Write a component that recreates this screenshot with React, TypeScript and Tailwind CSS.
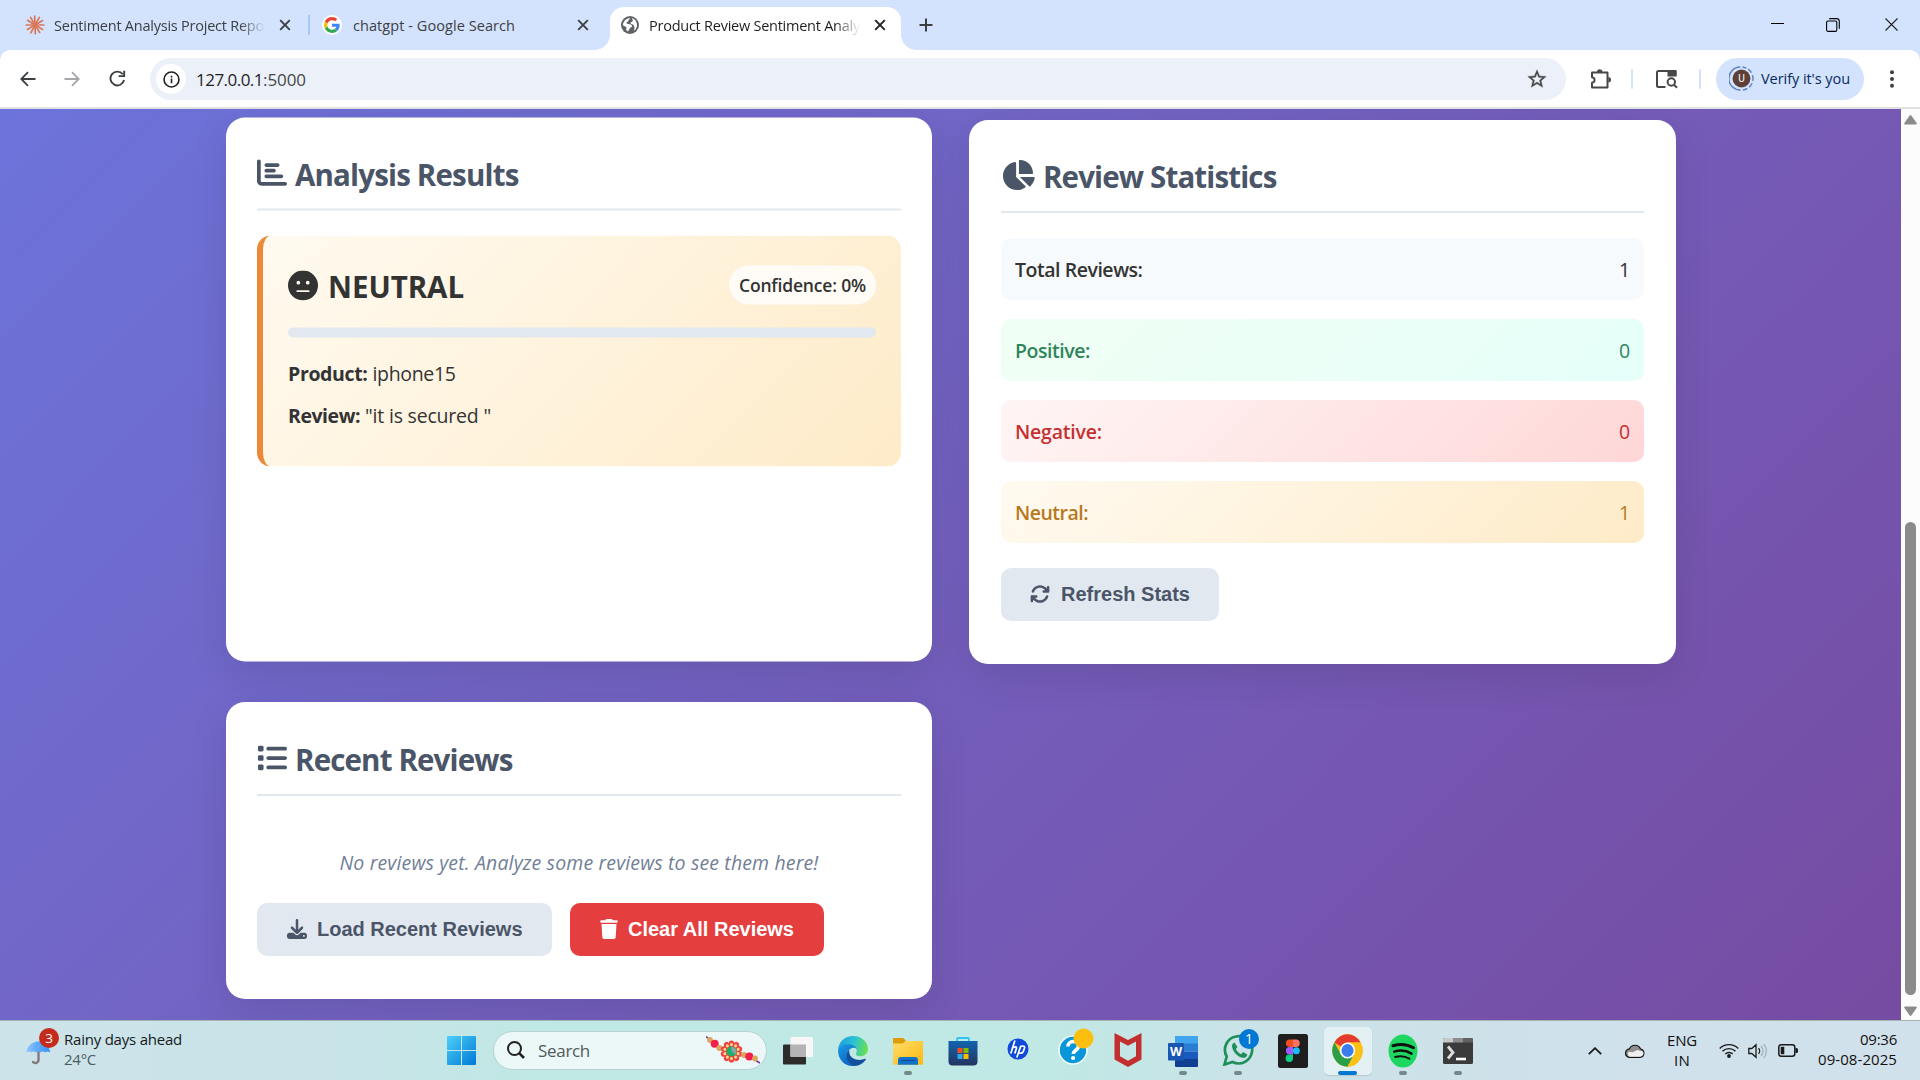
import { useLayoutEffect, useRef, useState } from "react";
import type { ReactNode } from "react";
import {
  FaArrowsRotate,
  FaChartBar,
  FaChartPie,
  FaDownload,
  FaFaceMeh,
  FaList,
  FaTrash,
} from "react-icons/fa6";

/** Single line of text whose tracking is adjusted so that it spans `w` pixels. */
function Line({ w, children, className = "" }: { w: number; children: string; className?: string }) {
  const ref = useRef<HTMLSpanElement>(null);
  const [spacing, setSpacing] = useState(0);
  useLayoutEffect(() => {
    if (!ref.current) return;
    const natural = ref.current.getBoundingClientRect().width;
    setSpacing((w - natural) / children.length);
  }, [w, children]);
  return (
    <span ref={ref} className={"inline-block shrink-0 whitespace-pre " + className} style={{ letterSpacing: spacing }}>
      {children}
    </span>
  );
}

/* ---------- Browser chrome ---------- */

function CloseX({ className }: { className: string }) {
  return (
    <svg viewBox="0 0 12 12" className={"h-3 w-3 shrink-0 " + className} fill="none" stroke="currentColor" strokeWidth="1.9">
      <path d="M1.2 1.2 10.8 10.8M10.8 1.2 1.2 10.8" />
    </svg>
  );
}

function Burst() {
  const rays = [0, 30, 58, 88, 118, 150, 180, 212, 240, 268, 300, 330];
  return (
    <svg viewBox="-10 -10 20 20" className="h-5 w-5 shrink-0" stroke="#d97757" strokeWidth="1.7" strokeLinecap="round">
      {rays.map((r) => (
        <path key={r} d="M1 0H8.8" transform={`rotate(${r})`} />
      ))}
    </svg>
  );
}

function GoogleG() {
  return (
    <span className="flex h-5 w-5 shrink-0 items-center justify-center rounded-full bg-white">
      <svg viewBox="0 0 48 48" className="h-4 w-4">
        <path fill="#ea4335" d="M24 9.5c3.54 0 6.71 1.22 9.21 3.6l6.85-6.85C35.9 2.38 30.47 0 24 0 14.62 0 6.51 5.38 2.56 13.22l7.98 6.19C12.43 13.72 17.74 9.5 24 9.5z" />
        <path fill="#4285f4" d="M46.98 24.55c0-1.57-.15-3.09-.38-4.55H24v9.02h12.94c-.58 2.96-2.26 5.48-4.78 7.18l7.73 6c4.51-4.18 7.09-10.36 7.09-17.65z" />
        <path fill="#fbbc05" d="M10.53 28.59c-.48-1.45-.76-2.99-.76-4.59s.27-3.14.76-4.59l-7.98-6.19C.92 16.46 0 20.12 0 24c0 3.88.92 7.54 2.56 10.78l7.97-6.19z" />
        <path fill="#34a853" d="M24 48c6.48 0 11.93-2.13 15.89-5.81l-7.73-6c-2.15 1.45-4.92 2.3-8.16 2.3-6.26 0-11.57-4.22-13.47-9.91l-7.98 6.19C6.51 42.62 14.62 48 24 48z" />
      </svg>
    </span>
  );
}

function Globe() {
  return (
    <svg viewBox="0 0 18 18" className="h-[18px] w-[18px] shrink-0">
      <circle cx="9" cy="9" r="9" fill="#5f6368" />
      <path
        d="M2 9.2C2 5.6 5 2.2 9.2 2c-.2 1.2-1.7 1.2-1.7 2.4 0 1.5-2 1.2-2 2.7 0 1.6 4.700.5 5.500 2.600.4 1.200-.8 1.800-1.800 1.900-.6 1.600-1.200 2.100-2.200 3.900C4.800 14.800 5 12.900 5.500 12 5.800 10.300 3.500 10.400 2 9.200zM11 2.300C14 3 16 5.800 16 9c0 2.500-1.300 4.600-3 5.800-.2-1.500 1-2.300.4-3.600-.5-1-.2-1.600-1.100-2.400-1.100-.9-2.600-.3-2.800-1.500-.2-1.500 2.200-1 2.300-2.500C11.900 3.800 11 3.500 11 2.300z"
        fill="#fff"
      />
    </svg>
  );
}

function TabStrip() {
  return (
    <div className="flex h-[50px] items-start bg-[#d3e2fd] text-[14.5px] leading-[20px] text-[#3c4043]">
      <div className="flex h-[50px] w-[310px] items-center pl-[25px]">
        <Burst />
        <div className="ml-[9px] h-[19px] w-[211px] [mask-image:linear-gradient(to_right,#000_88%,transparent)]">
          <Line w={210}>Sentiment Analysis Project Repo</Line>
        </div>
        <CloseX className="ml-[14px] text-[#3c4043]" />
        <span className="ml-[17px] h-5 w-[2px] bg-[#a8c7fa]" />
      </div>
      <div className="flex h-[50px] w-[285px] items-center pl-[12px]">
        <GoogleG />
        <div className="ml-[11px] h-[19px] w-[224px]">
          <Line w={162}>chatgpt - Google Search</Line>
        </div>
        <CloseX className="text-[#3c4043]" />
      </div>
      <div className="flex h-[50px] items-end">
        <div className="h-[15px] w-[15px] bg-[radial-gradient(circle_at_0_0,transparent_14.5px,#fff_15px)]" />
        <div className="flex h-[43px] w-[291px] items-center rounded-t-[14px] bg-white pb-[7px] pl-[11px] text-[#1f1f1f]">
          <Globe />
          <div className="ml-[10px] h-[19px] w-[211px] [mask-image:linear-gradient(to_right,#000_88%,transparent)]">
            <Line w={211}>Product Review Sentiment Analy</Line>
          </div>
          <CloseX className="ml-[14px] text-[#1f1f1f]" />
        </div>
        <div className="h-[15px] w-[15px] bg-[radial-gradient(circle_at_100%_0,transparent_14.5px,#fff_15px)]" />
      </div>
      <svg viewBox="0 0 14 14" className="mt-[18px] ml-[3px] h-[14px] w-[14px]" stroke="#3c4043" strokeWidth="2">
        <path d="M7 .5v13M.5 7h13" />
      </svg>
      <div className="ml-auto flex h-[50px] items-center pr-[22px] pb-[1px]">
        <span className="mb-[2px] h-px w-[13px] bg-black" />
        <svg viewBox="0 0 14 14" className="ml-[42px] h-[14px] w-[14px]" fill="none" stroke="#000" strokeWidth="1.1">
          <rect x=".6" y="3" width="10.200" height="10.400" rx="1.500" />
          <path d="M3.200 .6h7.300a2.800 2.800 0 0 1 2.800 2.800v7.300" />
        </svg>
        <svg viewBox="0 0 13 13" className="ml-[45px] h-[13px] w-[13px]" stroke="#222" strokeWidth="1.1">
          <path d="M.5.5l12 12M12.500.5l-12 12" />
        </svg>
      </div>
    </div>
  );
}

function Toolbar() {
  return (
    <div className="h-[59px] bg-[#d3e2fd]">
      <div className="flex h-[59px] items-start rounded-t-[10px] border-b-2 border-[#dfe1e2] bg-white">
        <div className="flex h-[57px] items-center pl-[20px] text-[#3c4043]">
          <svg viewBox="0 0 16 16" className="h-4 w-4" fill="none" stroke="currentColor" strokeWidth="1.800">
            <path d="M15.500 8H1.500M8 1.200 1.300 8 8 14.800" />
          </svg>
          <svg viewBox="0 0 16 16" className="ml-[28px] h-4 w-4 text-[#a5a7aa]" fill="none" stroke="currentColor" strokeWidth="1.800">
            <path d="M.5 8h14M8 1.200 14.700 8 8 14.800" />
          </svg>
          <svg viewBox="0 0 16 16" className="ml-[29px] h-[17px] w-[17px]" fill="none" stroke="currentColor" strokeWidth="1.800">
            <path d="M14.200 9.500A6.500 6.500 0 1 1 13 4M14.300.6v5.200H9.100" />
          </svg>
        </div>
        <div className="mt-[8px] ml-[24px] flex h-[42px] w-[1416px] items-center rounded-full bg-[#ebf0f9] pl-[6px] text-[17px] text-[#1f1f1f]">
          <span className="flex h-[30px] w-[30px] items-center justify-center rounded-full bg-white">
            <svg viewBox="0 0 18 18" className="h-[17px] w-[17px]" fill="none" stroke="#202124" strokeWidth="1.700">
              <circle cx="9" cy="9" r="7.900" />
              <path d="M9 8v5M9 4.900v1.900" />
            </svg>
          </span>
          <div className="mt-[2px] ml-[10px] flex">
            <Line w={67}>127.0.0.1</Line>
            <Line w={43} className="text-[#474747]">:5000</Line>
          </div>
          <svg viewBox="0 0 24 24" className="mr-[18px] ml-auto h-[22px] w-[22px]" fill="#474747">
            <path d="M22 9.240l-7.190-.62L12 2 9.190 8.630 2 9.240l5.460 4.730L5.820 21 12 17.270 18.180 21l-1.630-7.030L22 9.240zM12 15.400l-3.760 2.270 1-4.280-3.320-2.880 4.380-.38L12 6.100l1.710 4.040 4.380.38-3.320 2.880 1 4.280L12 15.400z" stroke="#474747" strokeWidth=".4" />
          </svg>
        </div>
        <div className="flex h-[57px] items-center">
          <svg viewBox="0 0 22 22" className="ml-[24px] h-[22px] w-[22px]">
            <path d="M2 4.500h15.500V19.500H2v-4.800c3.400-.5 3.400-5 0-5.500z" fill="none" stroke="#474747" strokeWidth="2" strokeLinejoin="round" />
            <path d="M7 4a2.700 2.700 0 0 1 5.400 0zM18.300 9a2.700 2.700 0 0 1 0 5.400z" fill="#474747" />
          </svg>
          <span className="ml-[19px] h-5 w-[2px] rounded bg-[#d3e2fd]" />
          <svg viewBox="0 0 22 20" className="ml-[22px] h-[20px] w-[23px]" fill="none" stroke="#474747" strokeWidth="2">
            <path d="M10 18H3a1.500 1.500 0 0 1-1.500-1.500V3.500A1.500 1.500 0 0 1 3 2h17v5" />
            <path d="M12 2h9v5.500h-9z" fill="#474747" stroke="none" />
            <circle cx="15.800" cy="13" r="3.700" />
            <path d="M18.500 15.800l3 3" />
          </svg>
          <span className="ml-[21px] h-5 w-[2px] rounded bg-[#d3e2fd]" />
          <div className="ml-[15px] flex h-[42px] w-[148px] items-center rounded-full bg-[#d3e2fd] pl-[13px] text-[14.5px] text-[#062a5e]">
            <svg viewBox="0 0 26 26" className="h-[25px] w-[25px]">
              <path d="M14 1A12 12 0 0 1 18 2.200M20 3.300A12 12 0 0 1 23.300 7M24.400 9.500A12 12 0 0 1 24.700 15.500M24 18A12 12 0 0 1 21 22M19 23.400A12 12 0 0 1 14.500 24.900M12 25A12 12 0 0 1 11.700 1" fill="none" stroke="#5c82bd" strokeWidth="1.500" />
              <circle cx="13" cy="13" r="9.300" fill="#5d4037" />
              <text x="13" y="16.800" textAnchor="middle" fill="#fff" fontSize="10.500" fontFamily="Roboto, sans-serif">U</text>
            </svg>
            <Line w={89} className="ml-[7px]">Verify it's you</Line>
          </div>
          <svg viewBox="0 0 4 18" className="ml-[26px] h-[18px] w-1" fill="#3c4043">
            <circle cx="2" cy="2.200" r="2" />
            <circle cx="2" cy="9" r="2" />
            <circle cx="2" cy="15.800" r="2" />
          </svg>
        </div>
      </div>
    </div>
  );
}

/* ---------- Page ---------- */

function Card({ children, className }: { children: ReactNode; className: string }) {
  return (
    <section className={"rounded-[19px] bg-white pt-[31px] shadow-[0_12px_38px_rgba(0,0,0,0.1)] " + className}>
      {children}
    </section>
  );
}

function Heading({ icon, text, w }: { icon: ReactNode; text: string; w: number }) {
  return (
    <h2 className="flex h-[62px] items-start border-b-2 border-[#e2e8f0] text-[29.5px] leading-[48px] font-bold text-[#4a5568]">
      <span className="mr-[8px] flex h-[48px] items-center">{icon}</span>
      <Line w={w} className="pt-[1.5px]">{text}</Line>
    </h2>
  );
}

function AnalysisResults() {
  return (
    <Card className="h-[544px] w-[706px] -translate-y-[2.5px] px-[31px]">
      <Heading icon={<FaChartBar className="h-[30px] w-[30px]" />} text="Analysis Results" w={223.5} />
      <div className="mt-[25px] h-[231px] rounded-[14px] border-l-[6px] border-[#ed8936] bg-linear-135 from-[#fffaf0] to-[#feebc8] px-[25px] pt-[26px] text-[#333]">
        <div className="flex h-[48px] items-center">
          <FaFaceMeh className="h-[30px] w-[30px]" />
          <Line w={136} className="ml-[10px] pt-[1px] text-[29.5px] leading-[48px] font-bold">NEUTRAL</Line>
          <span className="mb-[1px] ml-auto flex h-[39px] w-[147px] items-center justify-center rounded-full bg-white/80 text-[17.5px] font-semibold">
            <Line w={127}>Confidence: 0%</Line>
          </span>
        </div>
        <div className="mt-[18px] h-[10px] rounded-full bg-[#e2e8f0]" />
        <p className="mt-[20px] flex h-[32px] items-center text-[19.5px] leading-[32px]">
          <Line w={79.5} className="mr-[5px] font-bold">Product:</Line>
          <Line w={83}>iphone15</Line>
        </p>
        <p className="mt-[10px] flex h-[32px] items-center text-[19.5px] leading-[32px]">
          <Line w={72} className="mr-[5px] font-bold">Review:</Line>
          <Line w={126}>"it is secured "</Line>
        </p>
      </div>
    </Card>
  );
}

const stats = [
  { label: "Total Reviews:", value: "1", w: 127.5, tone: "bg-[#f7fafc] text-[#333]" },
  { label: "Positive:", value: "0", w: 75, tone: "bg-linear-135 from-[#f0fff4] to-[#e6fffa] text-[#2f855a]" },
  { label: "Negative:", value: "0", w: 87, tone: "bg-linear-135 from-[#fff5f5] to-[#fed7d7] text-[#c53030]" },
  { label: "Neutral:", value: "1", w: 73, tone: "bg-linear-135 from-[#fffaf0] to-[#feebc8] text-[#b7791f]" },
];

function ReviewStatistics() {
  return (
    <Card className="h-[544px] w-[707px] pr-[32px] pl-[32px]">
      <Heading icon={<FaChartPie className="h-[30px] w-[34px]" />} text="Review Statistics" w={233.5} />
      <div className="mt-[25px] flex flex-col gap-[19px]">
        {stats.map((s) => (
          <div key={s.label} className={"flex h-[62px] items-center justify-between rounded-[10px] px-[14px] pt-[2px] text-[19.5px] " + s.tone}>
            <Line w={s.w} className="font-semibold">{s.label}</Line>
            <Line w={11}>{s.value}</Line>
          </div>
        ))}
      </div>
      <button className="mt-[25px] flex h-[53px] w-[218px] items-center rounded-[10px] bg-[#e2e8f0] pb-[2px] pl-[29px] font-['Liberation_Sans',Arial,sans-serif] text-[20px] font-bold text-[#4a5568]">
        <FaArrowsRotate className="mr-[11px] h-[20px] w-[20px]" />
        <Line w={129}>Refresh Stats</Line>
      </button>
    </Card>
  );
}

function RecentReviews() {
  return (
    <Card className="h-[297px] w-[706px] px-[31px] pt-[32px]">
      <Heading icon={<FaList className="h-[30px] w-[30px]" />} text="Recent Reviews" w={217.5} />
      <p className="mt-[51px] text-center text-[19.5px] leading-[32px] text-[#718096] italic">
        <Line w={479}>No reviews yet. Analyze some reviews to see them here!</Line>
      </p>
      <div className="mt-[24px] flex gap-[18px] font-['Liberation_Sans',Arial,sans-serif] text-[20px] font-bold">
        <button className="flex h-[53px] w-[295px] items-center rounded-[10px] bg-[#e2e8f0] pb-[2px] pl-[30px] text-[#4a5568]">
          <FaDownload className="mr-[10px] h-[20px] w-[20px]" />
          <Line w={205.5}>Load Recent Reviews</Line>
        </button>
        <button className="flex h-[53px] w-[254px] items-center rounded-[10px] bg-[#e53e3e] pb-[2px] pl-[30px] text-white">
          <FaTrash className="mr-[10px] h-[20px] w-[18px]" />
          <Line w={166}>Clear All Reviews</Line>
        </button>
      </div>
    </Card>
  );
}

function Scrollbar() {
  return (
    <div className="flex h-[911px] w-[19px] flex-col items-center bg-[#fcfcfc]">
      <svg viewBox="0 0 13 10" className="mt-[6px] h-[10px] w-[13px]" fill="#8b8b8b">
        <path d="M5.500 .8a1.200 1.200 0 0 1 2 0L12.600 8a1 1 0 0 1-.8 1.600H1.200A1 1 0 0 1 .4 8z" />
      </svg>
      <div className="mt-[397px] h-[473px] w-[11px] rounded-full bg-[#8b8b8b]" />
      <svg viewBox="0 0 13 10" className="mt-[11px] h-[10px] w-[13px] rotate-180" fill="#8b8b8b">
        <path d="M5.500 .8a1.200 1.200 0 0 1 2 0L12.600 8a1 1 0 0 1-.8 1.600H1.200A1 1 0 0 1 .4 8z" />
      </svg>
    </div>
  );
}

/* ---------- Taskbar ---------- */

function Umbrella() {
  return (
    <svg viewBox="0 0 34 40" className="h-[40px] w-[34px] shrink-0">
      <defs>
        <linearGradient id="umb" x1="0" x2="1">
          <stop offset="0" stopColor="#8ec5fb" />
          <stop offset="1" stopColor="#2e90f5" />
        </linearGradient>
      </defs>
      <path d="M12.500 24v8.500a3.200 3.200 0 0 1-5.500 1.500" fill="none" stroke="#84797a" strokeWidth="2.400" strokeLinecap="round" />
      <path d="M.3 24.500C1 18.500 6 13.500 12 13.500s11.500 5 12.200 11c-1.500-1.300-4-1.300-5 0-1.200-1.300-3.800-1.300-5 0-1-1.300-3-1.300-4 0-1.200-1.300-3.600-1.300-4.600 0-1-1.200-3.800-1.200-5.300 0z" fill="url(#umb)" />
      <path d="M10 24C9 20 10 16 12 13.500 15 16 15.500 20 14.500 24" fill="none" stroke="#5aa6ee" strokeWidth=".7" />
      <circle cx="23" cy="10" r="10" fill="#c42b1c" />
      <text x="23" y="15" textAnchor="middle" fontSize="13.500" fill="#fff" fontFamily="Open Sans, sans-serif">3</text>
    </svg>
  );
}

function StartLogo() {
  return (
    <svg viewBox="0 0 29 29" className="h-[29px] w-[29px] shrink-0">
      <defs>
        <linearGradient id="win" x1="0" y1="0" x2="1" y2="1" gradientUnits="objectBoundingBox">
          <stop offset="0" stopColor="#4cd0fb" />
          <stop offset="1" stopColor="#0078d4" />
        </linearGradient>
      </defs>
      <path d="M1 0H14V14H0V1a1 1 0 0 1 1-1zM15 0h13a1 1 0 0 1 1 1v13H15zM0 15h14v14H1a1 1 0 0 1-1-1zM15 15h14v13a1 1 0 0 1-1 1H15z" fill="url(#win)" />
    </svg>
  );
}

function Rakhi() {
  const petals = [0, 36, 72, 108, 144, 180, 216, 252, 288, 324];
  return (
    <svg viewBox="0 0 54 28" className="h-[28px] w-[54px]">
      <path d="M0 .5 12 11M44 21l10 6" stroke="#6b3fa0" strokeWidth="1.600" />
      <circle cx="4" cy="4" r="2.900" fill="#dfa45f" />
      <circle cx="8.700" cy="7.700" r="4" fill="#f0204a" />
      <circle cx="13.300" cy="12" r="2.900" fill="#dfa45f" />
      <g transform="translate(25.500 15.500)">
        {petals.map((p) => (
          <circle key={p} cx="0" cy="-8.400" r="2.700" fill="#ef4444" transform={`rotate(${p})`} />
        ))}
        <circle r="8.800" fill="#e8473f" />
        {petals.map((p) => (
          <circle key={p} cx="0" cy="-7" r="1.500" fill="#ffd98a" transform={`rotate(${p})`} />
        ))}
        <circle r="5" fill="#1fae6a" />
        <path d="M0-5a5 5 0 0 1 4 8L0 0z" fill="#79a9a8" />
      </g>
      <circle cx="38" cy="19" r="2.900" fill="#dfa45f" />
      <circle cx="43.300" cy="20.500" r="4" fill="#f0204a" />
      <circle cx="49" cy="22.500" r="2.900" fill="#dfa45f" />
    </svg>
  );
}

function TaskViewIcon() {
  return (
    <svg viewBox="0 0 30 30" className="h-[30px] w-[30px]">
      <rect x="0" y="8.500" width="23" height="20" rx="1" fill="#2d2c2b" />
      <rect x="7.500" y="1" width="22.500" height="20" rx="1" fill="#f7f7f7" />
      <path d="M7.500 8.500H23V21H8.500a1 1 0 0 1-1-1z" fill="#b4b4b4" />
    </svg>
  );
}

function EdgeIcon() {
  return (
    <svg viewBox="0 0 30 30" className="h-[30px] w-[30px]">
      <defs>
        <linearGradient id="edgeTop" x1="0" y1=".4" x2="1" y2=".6">
          <stop offset="0" stopColor="#1c9fe0" />
          <stop offset=".5" stopColor="#2bc3d2" />
          <stop offset="1" stopColor="#6be24a" />
        </linearGradient>
        <linearGradient id="edgeLeft" x1="0" y1="0" x2=".6" y2="1">
          <stop offset="0" stopColor="#1b9de2" />
          <stop offset="1" stopColor="#0a63c4" />
        </linearGradient>
      </defs>
      <path d="M0 14C.5 6 7 0 15 0c9 0 15 6.500 15 13 0 4.500-3.500 7.300-7.500 7.300-3.500 0-5-1.400-4.700-2.500.2-.6 1-1.300 1-3 0-3-3-5.800-7-5.800C6 9 1.500 11 0 14z" fill="url(#edgeTop)" />
      <path d="M0 14c1.500-4 6-6 11-5.700 4.500.2 7 2.500 7.700 5C17.500 11.500 15 11.400 13 12.500 9.500 14.500 8 18 9 22c1 4 4 7 7.500 8C8 30.800 0 25 0 14z" fill="url(#edgeLeft)" />
      <path d="M11.500 13.500C7.500 17 7.800 22 10 25.300 12 28.400 14.800 30 16.500 30c5 0 9.200-3 11.300-6.500.3-.6-.2-1-.8-.7-6 2.700-14 .5-15.500-5-.4-1.500-.4-3 0-4.300z" fill="#12509c" />
    </svg>
  );
}

function FolderIcon() {
  return (
    <svg viewBox="0 0 30 30" className="h-[30px] w-[30px]">
      <defs>
        <linearGradient id="fold" x1="0" y1="0" x2="1" y2="1">
          <stop offset="0" stopColor="#ffdc6b" />
          <stop offset="1" stopColor="#fbb910" />
        </linearGradient>
      </defs>
      <path d="M0 3a1 1 0 0 1 1-1h8.500a2 2 0 0 1 1.400.6L13 5v4H0z" fill="#dd9b0a" />
      <path d="M0 7.500h9.500L12.500 5H29a1 1 0 0 1 1 1v22a.8.8 0 0 1-.8.800H.8A.8.8 0 0 1 0 28z" fill="url(#fold)" />
      <path d="M5 24a3 3 0 0 1 3-3h14a3 3 0 0 1 3 3v4.800H5z" fill="#1272c8" />
      <path d="M8.500 24.500h13" stroke="#0b4a8f" strokeWidth="1.200" strokeLinecap="round" />
    </svg>
  );
}

function StoreIcon() {
  return (
    <svg viewBox="0 0 30 30" className="h-[30px] w-[30px]">
      <defs>
        <linearGradient id="store" x1="0" y1="0" x2="0" y2="1">
          <stop offset="0" stopColor="#1264b0" />
          <stop offset="1" stopColor="#23345f" />
        </linearGradient>
      </defs>
      <path d="M9 6V3.500A1.500 1.500 0 0 1 10.500 2h9A1.500 1.500 0 0 1 21 3.500V6" fill="none" stroke="#2cc4f4" strokeWidth="1.800" />
      <path d="M.5 5h29v20.500a4 4 0 0 1-4 4h-21a4 4 0 0 1-4-4z" fill="url(#store)" />
      <path d="M9.500 12h5v5h-5z" fill="#f25022" />
      <path d="M15.500 12h5v5h-5z" fill="#7fba00" />
      <path d="M9.500 18h5v5h-5z" fill="#30a9e8" />
      <path d="M15.500 18h5v5h-5z" fill="#ffb900" />
    </svg>
  );
}

function HpIcon() {
  return (
    <svg viewBox="0 0 22 22" className="mb-[3px] h-[22px] w-[22px]">
      <circle cx="11" cy="11" r="10.500" fill="#0f4bd8" />
      <path d="M7.900 2.500 3.800 15.500M6 9.500c2.500-1.200 4-.8 3.300 1.300L7.800 15.500M13.800 8 9.800 19.500M13.600 8.300c3.200-.8 4.600-.2 3.700 2.300l-.8 2.400c-.6 2-1.500 2.500-4.300 2.200" fill="none" stroke="#fff" strokeWidth="1.700" />
    </svg>
  );
}

function HelpIcon() {
  return (
    <svg viewBox="0 0 36 38" className="-mt-[7px] ml-[6px] h-[38px] w-[36px] shrink-0">
      <circle cx="15" cy="22" r="14.800" fill="#eefafd" />
      <circle cx="15" cy="22" r="13.200" fill="#0a97d9" />
      <path d="M10 18.500c0-6.500 10.500-6.500 10.500-.4 0 4.400-5.300 4-5.300 8" fill="none" stroke="#fff" strokeWidth="3.600" />
      <circle cx="15.100" cy="30" r="2.100" fill="#fff" />
      <circle cx="25.500" cy="10.500" r="10" fill="#fdbf0f" />
    </svg>
  );
}

function McAfeeIcon() {
  return (
    <svg viewBox="0 0 28 34" className="mb-px h-[34px] w-[28px]">
      <path d="M.5 0 14 7 27.500 0V26.500L14 34 .5 26.500zM6 8.500v14.700l8 4.600 8-4.600V8.500l-8 4.300z" fill="#c1302f" fillRule="evenodd" />
    </svg>
  );
}

function WordIcon() {
  return (
    <svg viewBox="0 0 30 32" className="h-[32px] w-[30px]">
      <path d="M7 1h22a1 1 0 0 1 1 1v7H7z" fill="#41a5ee" />
      <path d="M7 8.500h23v8H7z" fill="#2b7cd3" />
      <path d="M7 16.500h23v8H7z" fill="#185abd" />
      <path d="M7 24h23v7a1 1 0 0 1-1 1H8a1 1 0 0 1-1-1z" fill="#103f91" />
      <rect x="0" y="8" width="16" height="17.500" rx="1" fill="#1b56b2" />
      <text x="8" y="21.300" textAnchor="middle" fontSize="12.500" fontWeight="700" fill="#fff" fontFamily="Open Sans, sans-serif">W</text>
    </svg>
  );
}

function WhatsAppIcon() {
  return (
    <svg viewBox="0 0 40 38" className="-mt-[7px] ml-[4px] h-[38px] w-[40px] shrink-0">
      <path d="M4.500 36.500l2.200-8A13.600 13.600 0 1 1 12.500 34z" fill="none" stroke="#1f8f59" strokeWidth="2.700" />
      <path d="M14.500 14.500c-2 .8-3 3-2.200 5.500 1.600 4.800 5.500 8.600 10 9.700 2.500.5 4.700-.6 5-3.300l-4.200-2.300-2 2.100c-2.300-1-4.200-2.900-5.200-5.200l1.500-2z" fill="#1f8f59" />
      <circle cx="29" cy="11" r="10" fill="#0078d4" />
      <text x="29" y="16" textAnchor="middle" fontSize="14" fill="#fff" fontFamily="Open Sans, sans-serif">1</text>
    </svg>
  );
}

function FigmaIcon() {
  return (
    <svg viewBox="0 0 30 34" className="h-[34px] w-[30px]">
      <rect width="30" height="34" rx="2.500" fill="#1e1e1e" />
      <path d="M15 5.500h-3.300a3.700 3.700 0 0 0 0 7.500H15z" fill="#f24e1e" />
      <path d="M15 5.500h3a3.700 3.700 0 0 1 0 7.500h-3z" fill="#ff7262" />
      <path d="M15 13h-3.300a3.700 3.700 0 0 0 0 7.500H15z" fill="#a259ff" />
      <circle cx="18.300" cy="16.800" r="3.500" fill="#1abcfe" />
      <path d="M15 20.500h-3.300a3.700 3.700 0 1 0 3.300 3.700z" fill="#0acf83" />
    </svg>
  );
}

function ChromeIcon() {
  return (
    <svg viewBox="0 0 48 48" className="h-[33px] w-[31px]" preserveAspectRatio="none">
      <circle cx="24" cy="24" r="23.500" fill="#fbc116" />
      <path d="M24 24 3.700 12.200A23.500 23.500 0 0 1 44.300 12.200H24z" fill="#e33b2e" />
      <path d="M24 24 13.800 29.900 3.700 12.200A23.500 23.500 0 0 0 24 47.500L34.200 29.900z" fill="#2a9f48" />
      <path d="M24 12.200H44.300A23.500 23.500 0 0 1 24 47.500L34.200 29.900z" fill="#fbc116" />
      <circle cx="24" cy="24" r="11.800" fill="#fff" />
      <circle cx="24" cy="24" r="9.400" fill="#3b7ded" />
    </svg>
  );
}

function SpotifyIcon() {
  return (
    <svg viewBox="0 0 30 34" className="h-[34px] w-[30px]">
      <ellipse cx="15" cy="17" rx="14.500" ry="16.500" fill="#1ed760" />
      <path d="M5 11.800c7-2.300 14.500-1.500 20.500 2" fill="none" stroke="#111" strokeWidth="3" strokeLinecap="round" />
      <path d="M6.200 17.600c6-1.900 12.200-1.200 17.300 2" fill="none" stroke="#111" strokeWidth="2.500" strokeLinecap="round" />
      <path d="M7.200 23c5-1.400 10-.8 14.200 1.700" fill="none" stroke="#111" strokeWidth="2" strokeLinecap="round" />
    </svg>
  );
}

function TerminalIcon() {
  return (
    <svg viewBox="0 0 30 26" className="h-[26px] w-[30px]">
      <rect width="30" height="26" rx="1.500" fill="#3b3b3b" />
      <path d="M0 4.500V1.500A1.500 1.500 0 0 1 1.500 0H10v4.500z" fill="#c8c8c8" />
      <path d="M10 0h10v4.500H10z" fill="#8d8d8d" />
      <path d="M20 0h8.500A1.500 1.500 0 0 1 30 1.500v3H20z" fill="#626262" />
      <path d="M5 8.500l5 6-5 6" fill="none" stroke="#dedede" strokeWidth="2.800" />
      <path d="M13 21h10" stroke="#fff" strokeWidth="2.600" />
    </svg>
  );
}

const apps: { id: string; icon: ReactNode; state: "none" | "open" | "active" }[] = [
  { id: "taskview", icon: <TaskViewIcon />, state: "none" },
  { id: "edge", icon: <EdgeIcon />, state: "none" },
  { id: "explorer", icon: <FolderIcon />, state: "open" },
  { id: "store", icon: <StoreIcon />, state: "none" },
  { id: "hp", icon: <HpIcon />, state: "none" },
  { id: "help", icon: <HelpIcon />, state: "none" },
  { id: "mcafee", icon: <McAfeeIcon />, state: "none" },
  { id: "word", icon: <WordIcon />, state: "open" },
  { id: "whatsapp", icon: <WhatsAppIcon />, state: "open" },
  { id: "figma", icon: <FigmaIcon />, state: "none" },
  { id: "chrome", icon: <ChromeIcon />, state: "active" },
  { id: "spotify", icon: <SpotifyIcon />, state: "open" },
  { id: "terminal", icon: <TerminalIcon />, state: "open" },
];

const tile = { none: "", open: "", active: "rounded-[5px] bg-[#e3f0f4] shadow-[0_1px_1px_rgba(0,0,0,0.12)]" };
const mark = { none: "w-0", open: "w-[8px] bg-[#748a8a]", active: "w-[19px] bg-[#0078d4]" };

function Tray() {
  return (
    <div className="ml-auto flex h-[59px] items-center pr-[23px] text-[15px] leading-[20px] text-[#111]">
      <svg viewBox="0 0 14 8" className="h-[8px] w-[14px]" fill="none" stroke="#1b1b1b" strokeWidth="1.800">
        <path d="M.8 7.200 7 1.200l6.200 6" />
      </svg>
      <svg viewBox="0 0 20 14" className="ml-[23px] h-[14px] w-[20px]">
        <path d="M5 13.300a4.200 4.200 0 0 1-.6-8.400A6 6 0 0 1 15.500 5a4.200 4.200 0 0 1-.5 8.300z" fill="#8f8f8f" stroke="#111" strokeWidth="1.200" />
        <path d="M4.500 12.700a3 3 0 0 1-.5-5l3.500.6L12.500 6l5.500 1.500a3.500 3.500 0 0 1-3 5.200z" fill="#eee" />
      </svg>
      <div className="mb-[2px] ml-[22px] flex w-[30px] flex-col items-center">
        <Line w={30}>ENG</Line>
        <Line w={16}>IN</Line>
      </div>
      <svg viewBox="0 0 20 15" className="ml-[22px] h-[15px] w-[20px]" fill="none" stroke="#1b1b1b" strokeWidth="1.400">
        <path d="M.7 5.500a13 13 0 0 1 18.600 0M3.500 8.300a9.200 9.200 0 0 1 13 0M6.300 11a5.300 5.300 0 0 1 7.400 0" />
        <circle cx="10" cy="13" r="1.200" fill="#1b1b1b" />
      </svg>
      <svg viewBox="0 0 20 16" className="ml-[9px] h-[16px] w-[20px]" fill="none" stroke="#1b1b1b" strokeWidth="1.300">
        <path d="M.8 5.500h3L8 1.800v12.400l-4.200-3.700h-3zM10.500 5.200a4 4 0 0 1 0 5.600" />
        <path d="M13 3a7 7 0 0 1 0 10M15.600 1a10 10 0 0 1 0 14" stroke="#a7b2ba" />
      </svg>
      <svg viewBox="0 0 20 13" className="ml-[10px] h-[13px] w-[20px]">
        <rect x=".8" y=".8" width="16" height="11.400" rx="2.500" fill="none" stroke="#1b1b1b" strokeWidth="1.500" />
        <rect x="2.700" y="2.700" width="3.600" height="7.600" rx=".8" fill="#1b1b1b" />
        <path d="M17.500 4h1a1.500 1.500 0 0 1 1.500 1.500v2A1.500 1.500 0 0 1 18.500 9h-1z" fill="#1b1b1b" />
      </svg>
      <div className="mb-[3px] ml-[20px] flex w-[79px] flex-col items-end">
        <Line w={37}>09:36</Line>
        <Line w={79}>09-08-2025</Line>
      </div>
    </div>
  );
}

function Taskbar() {
  return (
    <div className="flex h-[60px] items-center border-t border-[#a4b3b4] bg-[linear-gradient(90deg,#cde3ea_0%,#c8e4e8_18%,#c0e8e4_28%,#c0e8e4_55%,#cae3e8_65%,#cfe1ea_80%,#d1e1ec_100%)]">
      <div className="flex h-[59px] w-[447px] items-start pt-[7px] pl-[26px] text-[15px] leading-[20px] text-[#15191b]">
        <Umbrella />
        <div className="ml-[4px] flex flex-col items-start pt-[1px]">
          <Line w={118}>Rainy days ahead</Line>
          <Line w={32} className="text-[#4b5a5e]">24°C</Line>
        </div>
      </div>
      <StartLogo />
      <div className="mb-px ml-[17px] flex h-[39px] w-[274px] shrink-0 items-center rounded-full border border-[#b5d3d1] bg-[#ecf7f7] pl-[13px] text-[17px] text-[#505a5a]">
        <svg viewBox="0 0 18 18" className="h-[18px] w-[18px]" fill="none" stroke="#222" strokeWidth="2">
          <circle cx="7.500" cy="7.500" r="6.500" />
          <path d="M12.200 12.200 17 17" strokeWidth="2.600" />
        </svg>
        <Line w={52} className="mt-[2px] ml-[13px]">Search</Line>
        <span className="ml-auto pr-[6px]">
          <Rakhi />
        </span>
      </div>
      <div className="ml-[3px] flex">
        {apps.map((a) => (
          <div key={a.id} className="flex w-[55px] justify-center">
            <div className={"flex h-[48px] w-[48px] flex-col items-center " + tile[a.state]}>
              <div className="flex h-[44px] items-center justify-center pt-[4px]">{a.icon}</div>
              <span className={"h-1 rounded-full " + mark[a.state]} />
            </div>
          </div>
        ))}
      </div>
      <Tray />
    </div>
  );
}

export default function App() {
  return (
    <div className="flex h-[1080px] w-[1920px] flex-col overflow-hidden font-['Open_Sans','Noto_Sans',sans-serif]">
      <TabStrip />
      <Toolbar />
      <div className="flex h-[911px]">
        <main className="h-[911px] w-[1901px] overflow-hidden bg-linear-135 from-[#667eea] to-[#764ba2] bg-[length:1901px_1690px] bg-bottom bg-no-repeat">
          <div className="grid grid-cols-[706px_707px] gap-x-[37px] gap-y-[38px] pt-[11px] pl-[226px]">
            <AnalysisResults />
            <ReviewStatistics />
            <RecentReviews />
          </div>
        </main>
        <Scrollbar />
      </div>
      <Taskbar />
    </div>
  );
}
